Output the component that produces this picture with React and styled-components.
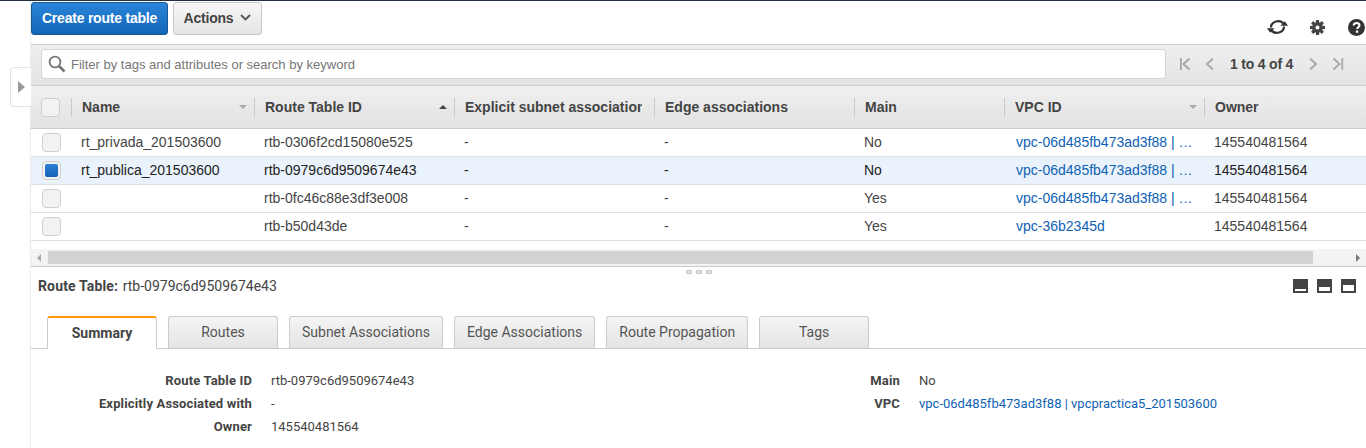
import React from 'react'
import styled, { createGlobalStyle } from 'styled-components'

const Global = createGlobalStyle`
  html, body { margin: 0; padding: 0; background: #fff; }
  body { font-family: "Liberation Sans", Arial, sans-serif; font-size: 14px; color: #444; overflow: hidden; }
  * { box-sizing: border-box; }
`

const columns = '40px 183px 200px 200px 200px 150px 200px 163px'

const rows = [
  { name: 'rt_privada_201503600', id: 'rtb-0306f2cd15080e525', main: 'No', vpc: 'vpc-06d485fb473ad3f88 | …' },
  { name: 'rt_publica_201503600', id: 'rtb-0979c6d9509674e43', main: 'No', vpc: 'vpc-06d485fb473ad3f88 | …', selected: true },
  { name: '', id: 'rtb-0fc46c88e3df3e008', main: 'Yes', vpc: 'vpc-06d485fb473ad3f88 | …' },
  { name: '', id: 'rtb-b50d43de', main: 'Yes', vpc: 'vpc-36b2345d' },
]

const headers = [
  { label: 'Name', sort: 'muted' },
  { label: 'Route Table ID', sort: 'up' },
  { label: 'Explicit subnet association' },
  { label: 'Edge associations' },
  { label: 'Main' },
  { label: 'VPC ID', sort: 'muted' },
  { label: 'Owner' },
]

const tabs = ['Routes', 'Subnet Associations', 'Edge Associations', 'Route Propagation', 'Tags']

const RefreshIcon = () => (
  <svg width="21" height="16" viewBox="0 0 21 16">
    <path d="M4 8.500C4 2.500 13 -0.500 16.800 5" fill="none" stroke="#333" strokeWidth="2.200" />
    <path d="M17 7.500C17 13.500 8 16.500 4.200 11" fill="none" stroke="#333" strokeWidth="2.200" />
    <path d="M13.500 6.800h7.500l-3.200-4.600zM7.500 9.200H0l3.200 4.600z" fill="#333" />
  </svg>
)

const GearIcon = () => (
  <svg width="15" height="15" viewBox="0 0 15 15">
    <circle cx="7.500" cy="7.500" r="3.700" fill="none" stroke="#444" strokeWidth="3.400" />
    {[0, 45, 90, 135, 180, 225, 270, 315].map(a => (
      <rect key={a} x="5.900" y="0" width="3.200" height="3" fill="#444" transform={`rotate(${a} 7.500 7.500)`} />
    ))}
  </svg>
)

const HelpIcon = () => (
  <svg width="17" height="17" viewBox="0 0 17 17">
    <circle cx="8.500" cy="8.500" r="8.500" fill="#333" />
    <path d="M5.700 6.500c0-3.300 5.800-3.300 5.800-.2 0 2-2.300 2-2.300 3.800" fill="none" stroke="#fff" strokeWidth="2" />
    <rect x="7.900" y="11.500" width="2.300" height="2.300" fill="#fff" />
  </svg>
)

const SearchIcon = () => (
  <svg width="18" height="18" viewBox="0 0 18 18">
    <circle cx="7" cy="7" r="5.400" fill="none" stroke="#777" strokeWidth="1.800" />
    <path d="M11 11l5.500 5.500" stroke="#777" strokeWidth="2.600" />
  </svg>
)

const Pager = ({ d, bar }) => (
  <svg width="12" height="14" viewBox="0 0 12 14">
    <path d={d} fill="none" stroke="#a9a9a9" strokeWidth="2" />
    {bar !== undefined && <rect x={bar} y="1" width="1.800" height="12" fill="#a9a9a9" />}
  </svg>
)

const PanelIcon = ({ height }) => (
  <PanelGlyph>
    <PanelFill $height={height} />
  </PanelGlyph>
)

const App = () => (
  <>
    <Global />
    <TopLine />
    <Shell>
      <Handle>
        <HandleArrow />
      </Handle>
      <Content>
        <Toolbar>
          <Primary>Create route table</Primary>
          <Secondary>
            Actions
            <svg width="11" height="7" viewBox="0 0 11 7">
              <path d="M1 1l4.500 4.500L10 1" fill="none" stroke="#555" strokeWidth="1.800" />
            </svg>
          </Secondary>
          <ToolIcons>
            <RefreshIcon />
            <GearIcon />
            <HelpIcon />
          </ToolIcons>
        </Toolbar>

        <FilterBar>
          <Search>
            <SearchIcon />
            <span>Filter by tags and attributes or search by keyword</span>
          </Search>
          <Pagination>
            <Pager d="M10.500 1.500L4.500 7l6 5.500" bar={1} />
            <Pager d="M9 1.500L3 7l6 5.500" />
            <PageText>1 to 4 of 4</PageText>
            <Pager d="M3 1.500L9 7l-6 5.500" />
            <Pager d="M1.500 1.500L7.500 7l-6 5.500" bar={9.400} />
          </Pagination>
        </FilterBar>

        <HeaderRow>
          <CheckCell>
            <Box />
          </CheckCell>
          {headers.map(h => (
            <HeaderCell key={h.label}>
              <HeaderLabel>{h.label}</HeaderLabel>
              {h.sort && <SortMark $up={h.sort === 'up'} />}
            </HeaderCell>
          ))}
        </HeaderRow>

        {rows.map(r => (
          <Row key={r.id} $selected={r.selected}>
            <RowCheckCell>
              <Box>{r.selected && <BoxFill />}</Box>
            </RowCheckCell>
            <Cell>{r.name}</Cell>
            <Cell>{r.id}</Cell>
            <Cell>-</Cell>
            <Cell>-</Cell>
            <Cell>{r.main}</Cell>
            <LinkCell>{r.vpc}</LinkCell>
            <Cell>145540481564</Cell>
          </Row>
        ))}

        <Scrollbar>
          <ScrollArrow $left />
          <ScrollThumb />
          <ScrollArrow />
        </Scrollbar>

        <Grip>
          <i />
          <i />
          <i />
        </Grip>

        <DetailHead>
          <DetailTitle>
            <b>Route Table:</b> rtb-0979c6d9509674e43
          </DetailTitle>
          <PanelIcons>
            <PanelIcon height={2} />
            <PanelIcon height={4} />
            <PanelIcon height={6} />
          </PanelIcons>
        </DetailHead>

        <TabBar>
          <ActiveTab>Summary</ActiveTab>
          {tabs.map(t => (
            <Tab key={t} $wide={t === 'Routes' || t === 'Tags'}>{t}</Tab>
          ))}
        </TabBar>

        <Summary>
          <SummaryColumn>
            <Label>Route Table ID</Label>
            <Value>rtb-0979c6d9509674e43</Value>
            <Label>Explicitly Associated with</Label>
            <Value>-</Value>
            <Label>Owner</Label>
            <Value>145540481564</Value>
          </SummaryColumn>
          <SummaryColumnRight>
            <Label>Main</Label>
            <Value>No</Value>
            <Label>VPC</Label>
            <ValueLink>vpc-06d485fb473ad3f88 | vpcpractica5_201503600</ValueLink>
          </SummaryColumnRight>
        </Summary>
      </Content>
    </Shell>
  </>
)

const TopLine = styled.div`
  height: 1px;
  background: #232f3e;
`

const Shell = styled.div`
  position: relative;
  height: 447px;
  padding-left: 30px;
`

const Handle = styled.div`
  position: absolute;
  left: 10px;
  top: 66px;
  width: 21px;
  height: 40px;
  background: #fff;
  border: 1px solid #e3e3e3;
  border-right: none;
  border-radius: 4px 0 0 4px;
  display: flex;
  align-items: center;
  justify-content: center;
  z-index: 2;
`

const HandleArrow = styled.div`
  width: 0;
  height: 0;
  border-left: 7px solid #999;
  border-top: 6px solid transparent;
  border-bottom: 6px solid transparent;
`

const Content = styled.div`
  height: 100%;
  border-left: 1px solid #eaeded;
  overflow: hidden;
`

const Toolbar = styled.div`
  height: 43px;
  display: flex;
  align-items: flex-start;
  gap: 5px;
  padding-top: 1px;
`

const Primary = styled.div`
  width: 137px;
  height: 33px;
  padding-bottom: 2px;
  border: 1px solid #19598f;
  border-radius: 3px;
  background: linear-gradient(#2a84d8, #1166bb);
  color: #fff;
  font-weight: 700;
  font-size: 14px;
  letter-spacing: -0.22px;
  display: flex;
  align-items: center;
  justify-content: center;
`

const Secondary = styled.div`
  width: 89px;
  height: 33px;
  padding-bottom: 2px;
  border: 1px solid #c8c8c8;
  border-radius: 3px;
  background: linear-gradient(#f7f7f7, #e4e4e4);
  color: #444;
  font-weight: 700;
  font-size: 14px;
  letter-spacing: -0.2px;
  display: flex;
  align-items: center;
  justify-content: center;
  gap: 7px;
`

const ToolIcons = styled.div`
  margin-left: auto;
  display: flex;
  align-items: center;
  height: 18px;
  margin-top: 16px;
  margin-right: 1px;
  gap: 22px;
  svg:nth-child(2) {
    margin-right: 1px;
  }
`

const FilterBar = styled.div`
  height: 42px;
  padding: 0 0 2px 10px;
  border-top: 1px solid #ccc;
  border-bottom: 1px solid #ccc;
  background: linear-gradient(#efefef, #e4e4e4);
  display: flex;
  align-items: center;
`

const Search = styled.div`
  width: 1125px;
  height: 30px;
  background: #fff;
  border: 1px solid #d5d5d5;
  border-radius: 3px;
  display: flex;
  align-items: center;
  gap: 5px;
  padding-left: 6px;
  color: #767676;
  font-size: 13px;
`

const Pagination = styled.div`
  display: flex;
  align-items: center;
  margin-left: 13px;
  gap: 13px;
`

const PageText = styled.span`
  font-weight: 700;
  font-size: 14px;
  color: #444;
  letter-spacing: -0.2px;
  margin: 0 1px;
`

const HeaderRow = styled.div`
  display: grid;
  grid-template-columns: ${columns};
  height: 43px;
  background: linear-gradient(#f0f0f0, #e2e2e2);
  border-bottom: 1px solid #ccc;
  align-items: center;
`

const CheckCell = styled.div`
  display: flex;
  align-items: center;
  padding-left: 10px;
`

const RowCheckCell = styled(CheckCell)`
  padding-left: 11px;
`

const Box = styled.div`
  width: 19px;
  height: 19px;
  border: 1px solid #cfcfcf;
  border-radius: 4px;
  background: #f2f2f2;
  display: flex;
  align-items: center;
  justify-content: center;
`

const BoxFill = styled.div`
  width: 13px;
  height: 13px;
  border-radius: 2px;
  background: linear-gradient(#2a7fd6, #1563b5);
`

const HeaderCell = styled.div`
  height: 19px;
  display: flex;
  align-items: center;
  padding: 0 10px;
  border-left: 1px solid #c8c8c8;
  overflow: hidden;
`

const HeaderLabel = styled.span`
  margin-right: 2px;
  font-weight: 700;
  font-size: 14px;
  color: #444;
  white-space: nowrap;
  overflow: hidden;
  flex: 1;
`

const SortMark = styled.span`
  width: 0;
  height: 0;
  margin-right: -3px;
  border-left: 4px solid transparent;
  border-right: 4px solid transparent;
  ${p => (p.$up ? 'border-bottom: 4px solid #444;' : 'border-top: 4px solid #aaa;')}
`

const Row = styled.div`
  display: grid;
  grid-template-columns: ${columns};
  height: 28px;
  align-items: center;
  border-bottom: 1px solid #e0e0e0;
  background: ${p => (p.$selected ? '#eaf2fb' : '#fff')};
  color: ${p => (p.$selected ? '#222' : '#444')};
`

const Cell = styled.div`
  padding: 0 0 2px 10px;
  font-size: 14px;
  white-space: nowrap;
`

const LinkCell = styled(Cell)`
  padding-left: 12px;
  color: #0f62b5;
`

const Scrollbar = styled.div`
  margin-top: 8px;
  height: 17px;
  background: #f3f3f3;
  display: flex;
  align-items: center;
`

const ScrollArrow = styled.span`
  width: 0;
  height: 0;
  border-top: 4px solid transparent;
  border-bottom: 4px solid transparent;
  margin: ${p => (p.$left ? '0 0 0 6px' : '0 6px 0 auto')};
  ${p => (p.$left ? 'border-right: 4px solid #aaa;' : 'border-left: 4px solid #777;')}
`

const ScrollThumb = styled.div`
  width: 1265px;
  height: 13px;
  margin-left: 7px;
  background: #d2d2d2;
`

const Grip = styled.div`
  height: 7px;
  border-top: 1px solid #ccc;
  display: flex;
  justify-content: center;
  gap: 4px;
  padding-top: 3px;
  i {
    width: 6px;
    height: 4px;
    background: #e4e4e4;
    border: 1px solid #c4c4c4;
    border-radius: 1px;
  }
`

const DetailHead = styled.div`
  height: 26px;
  display: flex;
  align-items: center;
  justify-content: space-between;
  padding: 0 10px 0 7px;
`

const DetailTitle = styled.div`
  font-size: 14px;
  color: #444;
  font-family: Roboto, sans-serif;
  b {
    font-weight: 700;
    letter-spacing: 0.15px;
    margin-right: 1px;
  }
`

const PanelIcons = styled.div`
  display: flex;
  gap: 9px;
`

const PanelGlyph = styled.div`
  width: 15px;
  height: 14px;
  background: #444;
  display: flex;
  align-items: flex-end;
  justify-content: center;
  padding: 0 2px 2px;
`

const PanelFill = styled.div`
  width: 100%;
  height: ${p => p.$height}px;
  background: #fff;
`

const TabBar = styled.div`
  height: 33px;
  margin-top: 17px;
  padding-left: 16px;
  display: flex;
  align-items: flex-end;
  gap: 11px;
  border-bottom: 1px solid #ccc;
  font-family: Roboto, sans-serif;
  font-size: 14px;
`

const Tab = styled.div`
  height: 32px;
  padding: 0 ${p => (p.$wide ? '32px' : '12px')} 2px;
  ${p => p.$wide && 'min-width: 110px;'}
  border: 1px solid #ccc;
  border-bottom: none;
  border-radius: 3px 3px 0 0;
  background: linear-gradient(#f5f5f5, #e4e4e4);
  color: #555;
  display: flex;
  align-items: center;
  justify-content: center;
`

const ActiveTab = styled.div`
  width: 110px;
  height: 33px;
  margin-bottom: -1px;
  padding-bottom: 1px;
  border: 1px solid #ccc;
  border-top: 2px solid #f90;
  border-bottom: none;
  border-radius: 3px 3px 0 0;
  background: #fff;
  color: #444;
  font-weight: 700;
  display: flex;
  align-items: center;
  justify-content: center;
`

const Summary = styled.div`
  display: flex;
  padding-top: 20px;
  font-family: Roboto, sans-serif;
  font-size: 13px;
`

const SummaryColumn = styled.div`
  width: 426px;
  display: grid;
  grid-template-columns: 221px 1fr;
  column-gap: 19px;
  grid-auto-rows: 23px;
  align-items: center;
`

const SummaryColumnRight = styled(SummaryColumn)`
  width: auto;
  margin-left: 18px;
  grid-template-columns: 425px 1fr;
`

const Label = styled.div`
  text-align: right;
  font-weight: 700;
  color: #444;
  letter-spacing: 0.15px;
  white-space: nowrap;
`

const Value = styled.div`
  color: #444;
  white-space: nowrap;
`

const ValueLink = styled(Value)`
  color: #0f62b5;
`

export default App
